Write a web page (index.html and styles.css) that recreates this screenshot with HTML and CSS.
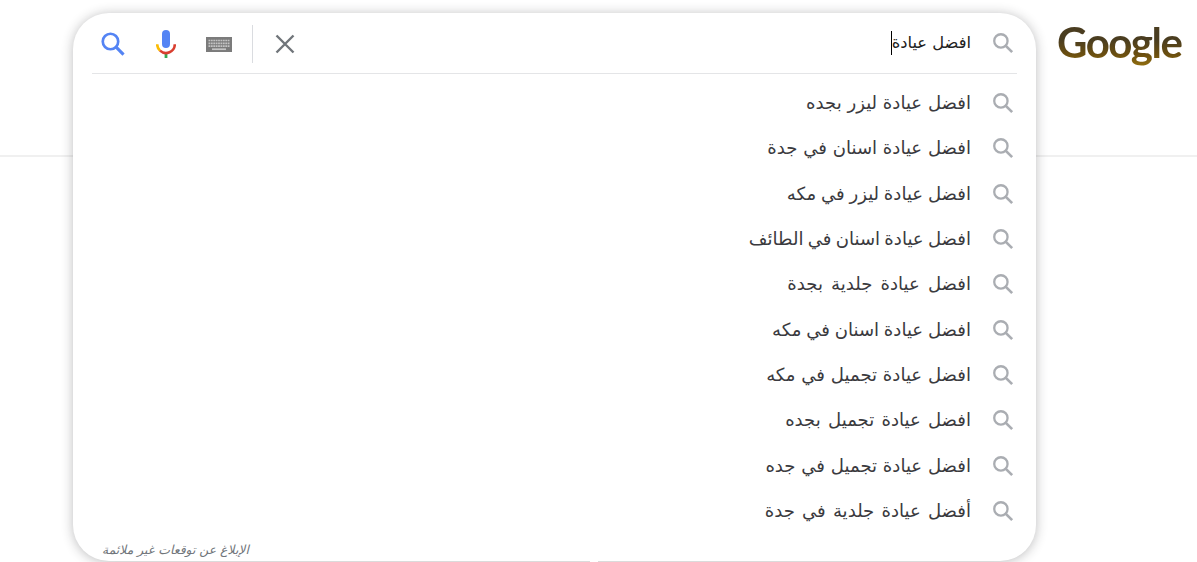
FILE: index.html
```html
<!DOCTYPE html>
<html lang="ar" dir="rtl">
<head>
    <meta charset="UTF-8">
    <meta name="viewport" content="width=device-width, initial-scale=1.0">
    <title>افضل عيادة - Google</title>
    <link rel="stylesheet" href="styles.css">
</head>
<body>
    <svg class="sprite">
        <symbol id="icon-search" viewBox="0 0 24 24">
            <circle cx="9.5" cy="9.5" r="6.4" fill="none" stroke="currentColor" stroke-width="2.2"/>
            <path d="M14 14 L20.3 20.3" fill="none" stroke="currentColor" stroke-width="2.6"/>
        </symbol>
    </svg>

    <div class="header">
        <div class="logo" dir="ltr">Google</div>

        <div class="search-card">
            <div class="search-bar">
                <svg class="icon-search"><use href="#icon-search"/></svg>
                <div class="query"><span>افضل عيادة</span><i class="caret"></i></div>
                <div class="tools">
                    <svg class="icon-clear" viewBox="0 0 20 20"><path d="M1.5 1.5 L18.5 18.5 M18.5 1.5 L1.5 18.5"/></svg>
                    <span class="divider"></span>
                    <svg class="icon-keyboard" viewBox="0 0 26 15">
                        <rect width="26" height="15" fill="#7b7b7b"/>
                        <path d="M2.5 3.5 H23.5 M2.5 6.3 H23.5 M2.5 9.1 H23.5" stroke="#c4c4c4" stroke-width="1.7" stroke-dasharray="1.8 .6"/>
                        <path d="M6 12.2 H20" stroke="#c4c4c4" stroke-width="1.7"/>
                    </svg>
                    <svg class="icon-mic" viewBox="0 0 20 28">
                        <path d="M10 22.5 V28" stroke="#34a853" stroke-width="2.8"/>
                        <path d="M1.2 14.2 A8.8 8.8 0 0 0 4 20.6" stroke="#fbbc04" stroke-width="2.6"/>
                        <path d="M4 20.6 A8.8 8.8 0 0 0 18.8 14.2" stroke="#d93f30" stroke-width="2.6"/>
                        <rect x="6" y="0" width="8" height="18" rx="4" fill="#5484f4"/>
                    </svg>
                    <svg class="icon-submit"><use href="#icon-search"/></svg>
                </div>
            </div>

            <ul class="suggestions">
                <li><svg class="icon-search"><use href="#icon-search"/></svg><span>افضل عيادة ليزر بجده</span></li>
                <li><svg class="icon-search"><use href="#icon-search"/></svg><span>افضل عيادة اسنان في جدة</span></li>
                <li><svg class="icon-search"><use href="#icon-search"/></svg><span>افضل عيادة ليزر في مكه</span></li>
                <li><svg class="icon-search"><use href="#icon-search"/></svg><span>افضل عيادة اسنان في الطائف</span></li>
                <li><svg class="icon-search"><use href="#icon-search"/></svg><span>افضل عيادة جلدية بجدة</span></li>
                <li><svg class="icon-search"><use href="#icon-search"/></svg><span>افضل عيادة اسنان في مكه</span></li>
                <li><svg class="icon-search"><use href="#icon-search"/></svg><span>افضل عيادة تجميل في مكه</span></li>
                <li><svg class="icon-search"><use href="#icon-search"/></svg><span>افضل عيادة تجميل بجده</span></li>
                <li><svg class="icon-search"><use href="#icon-search"/></svg><span>افضل عيادة تجميل في جده</span></li>
                <li><svg class="icon-search"><use href="#icon-search"/></svg><span>أفضل عيادة جلدية في جدة</span></li>
            </ul>

            <a class="report">الإبلاغ عن توقعات غير ملائمة</a>
        </div>
    </div>
</body>
</html>
```

FILE: styles.css
```css
* {
    box-sizing: border-box;
}
body {
    margin: 0;
    height: 562px;
    overflow: hidden;
    background: #fff;
    font-family: "DejaVu Sans", sans-serif;
    color: #3a3a3e;
}
.sprite {
    display: none;
}
.header {
    display: flex;
    align-items: flex-start;
    height: 157px;
    padding: 13px 13px 0 0;
    border-bottom: 2px solid #f0f0f0;
}
.logo {
    width: 127px;
    margin-left: 21px;
    padding-bottom: 8px;
    font-family: Lato, sans-serif;
    font-size: 42px;
    line-height: 59px;
    font-weight: 700;
    letter-spacing: -1.5px;
    background: linear-gradient(#4a3d20 40%, #6b4f10 62%, #a07a10 85%);
    -webkit-background-clip: text;
    background-clip: text;
    color: transparent;
}
.search-card {
    position: relative;
    display: flex;
    flex-direction: column;
    flex: none;
    width: 963px;
    height: 548px;
    padding: 0 19px;
    background: #fff;
    border-radius: 36px;
    box-shadow: 0 1px 12px rgba(32, 33, 36, 0.3);
}
/* small break in the bottom edge */
.search-card::after {
    content: "";
    position: absolute;
    bottom: -2px;
    left: 517px;
    width: 8px;
    height: 3px;
    background: #fff;
}
.search-bar {
    display: flex;
    align-items: center;
    flex: none;
    height: 61px;
    padding-right: 3px;
    border-bottom: 1px solid #e4e5e7;
}
.icon-search {
    flex: none;
    width: 25px;
    height: 25px;
    margin-right: -2px;
    color: #aaadb2;
}
.query {
    display: flex;
    align-items: center;
    margin-right: 20px;
    font-size: 16.3px;
    color: #222;
}
.query span {
    padding-bottom: 2px;
}
.caret {
    width: 1px;
    height: 24px;
    background: #000;
}
.tools {
    display: flex;
    align-items: center;
    margin-right: auto;
    padding: 2px 0 0 7px;
}
.icon-clear {
    width: 20px;
    height: 20px;
    fill: none;
    stroke: #70757a;
    stroke-width: 2.4;
}
.divider {
    width: 1px;
    height: 38px;
    margin: 0 22px 0 20px;
    background: #dadce0;
}
.icon-keyboard {
    width: 26px;
    height: 15px;
}
.icon-mic {
    width: 20px;
    height: 28px;
    margin: 0 30px 0 28px;
    fill: none;
}
.icon-submit {
    width: 29px;
    height: 29px;
    color: #5484f4;
}
.suggestions {
    margin: 0;
    padding: 7px 3px 0 0;
    list-style: none;
    font-size: 18.1px;
}
.suggestions li {
    display: flex;
    align-items: center;
    height: 45.3px;
}
.suggestions span {
    margin-right: 20px;
    padding-bottom: 2px;
    white-space: nowrap;
}
.suggestions li:nth-child(3) span,
.suggestions li:nth-child(6) span {
    word-spacing: -1px;
}
.suggestions li:nth-child(4) span {
    word-spacing: -1.5px;
}
.suggestions li:nth-child(5) span {
    word-spacing: 2.3px;
}
.suggestions li:nth-child(8) span,
.suggestions li:nth-child(10) span {
    word-spacing: 1.4px;
}
.report {
    margin: 7px auto 0 10px;
    font-size: 12.4px;
    line-height: 18px;
    font-style: italic;
    color: #70757a;
}
```
